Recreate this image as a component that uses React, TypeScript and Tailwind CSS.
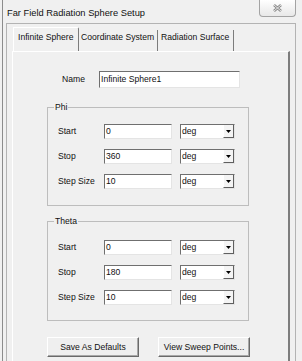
const phiRows = [
  { label: "Start", value: "0" },
  { label: "Stop", value: "360" },
  { label: "Step Size", value: "10" },
];

const thetaRows = [
  { label: "Start", value: "0" },
  { label: "Stop", value: "180" },
  { label: "Step Size", value: "10" },
];

function TextBox({ value, className }: { value: string; className: string }) {
  return (
    <div
      className={`bg-white border border-t-[#6f6f6f] border-l-[#6f6f6f] border-r-[#e4e4e4] border-b-[#e4e4e4] flex items-center pl-[1px] leading-none ${className}`}
    >
      {value}
    </div>
  );
}

function Combo() {
  return (
    <div className="ml-[8px] w-[55px] h-[15px] bg-white border border-t-[#6f6f6f] border-l-[#6f6f6f] border-r-[#e4e4e4] border-b-[#e4e4e4] flex">
      <span className="flex-1 pl-[1px] flex items-center leading-none">deg</span>
      <span className="w-[11px] border-l border-l-white border-r border-b border-r-[#5f5f5f] border-b-[#5f5f5f] bg-[#f4f4f4] flex items-center justify-center">
        <svg width="5" height="3" viewBox="0 0 5 3">
          <path d="M0 0h5L2.5 3z" fill="#000" />
        </svg>
      </span>
    </div>
  );
}

function Group({
  title,
  rows,
  pad,
}: {
  title: string;
  rows: { label: string; value: string }[];
  pad: string;
}) {
  return (
    <div className={`relative w-[202px] border border-[#bdbdbd] pl-[10px] flex flex-col gap-[10px] ${pad}`}>
      <span className="absolute -top-[6px] left-[6px] px-[1px] bg-[#f0f0f0] leading-[11px]">
        {title}
      </span>
      {rows.map((r) => (
        <div key={r.label} className="flex items-center h-[15px]">
          <span className="w-[46px] leading-none">{r.label}</span>
          <TextBox value={r.value} className="w-[68px] h-[15px]" />
          <Combo />
        </div>
      ))}
    </div>
  );
}

function Button({ children }: { children: string }) {
  return (
    <button className="w-[92px] h-[20px] bg-[#efefef] border border-t-white border-l-white border-r-[#6a6a6a] border-b-[#6a6a6a] shadow-[inset_-1px_-1px_0_#a8a8a8] flex items-center justify-center leading-none">
      {children}
    </button>
  );
}

export default function App() {
  return (
    <div className="w-[302px] h-[361px] overflow-hidden bg-[#f0f0f0] text-[#111] font-['Liberation_Sans',Arial,sans-serif] text-[8.6px] pl-[2px]">
      <div className="w-[300px] h-full border-l border-[#8c8c8c] flex flex-col">
        {/* title bar */}
        <div className="h-[23px] flex justify-between items-start shrink-0">
          <span className="pl-[4px] pt-[8px] text-[9.3px] leading-[11px]">
            Far Field Radiation Sphere Setup
          </span>
          <div className="mr-[6px] w-[37px] h-[17px] border border-t-0 border-[#a3a3a3] rounded-b-[4px] bg-gradient-to-b from-white to-[#e8e8e8] flex items-center justify-center">
            <svg width="9" height="8" viewBox="0 0 9 8">
              <path d="M1 1l7 6M8 1L1 7" stroke="#8a8a8a" strokeWidth="2.6" />
              <path d="M1 1l7 6M8 1L1 7" stroke="#ececec" strokeWidth="0.9" />
            </svg>
          </div>
        </div>

        {/* client area */}
        <div className="ml-[3px] mr-[6px] flex-1 border-t border-l border-r border-[#b3b3b3] pl-[5px] pr-[5px] flex flex-col">
          {/* tabs */}
          <div className="h-[27px] flex items-end pl-[1px] shrink-0">
            <div className="w-[66px] h-[24px] border-t border-l border-white border-r border-r-[#7c7c7c] rounded-tr-[2px] pl-[4px] pt-[4px] leading-[10px]">
              Infinite Sphere
            </div>
            <div className="w-[79px] h-[21px] border-r border-r-[#7c7c7c] pl-[2px] pt-[2px] leading-[10px]">
              Coordinate System
            </div>
            <div className="w-[76px] h-[21px] border-r border-r-[#7c7c7c] pl-[3px] pt-[2px] leading-[10px]">
              Radiation Surface
            </div>
          </div>

          {/* tab panel */}
          <div className="flex-1 border-t border-l border-white border-r-2 border-r-[#7d7d7d] pl-[34px] flex flex-col">
            <div className="mt-[19px] flex items-center">
              <span className="w-[52px] pl-[15px] leading-none">Name</span>
              <TextBox value="Infinite Sphere1" className="w-[141px] h-[17px]" />
            </div>

            <div className="mt-[19px]">
              <Group title="Phi" rows={phiRows} pad="pt-[16px] pb-[16px]" />
            </div>

            <div className="mt-[15px]">
              <Group title="Theta" rows={thetaRows} pad="pt-[18px] pb-[15px]" />
            </div>

            <div className="mt-[16px] flex gap-[19px]">
              <Button>Save As Defaults</Button>
              <Button>View Sweep Points...</Button>
            </div>
          </div>
        </div>
      </div>
    </div>
  );
}
